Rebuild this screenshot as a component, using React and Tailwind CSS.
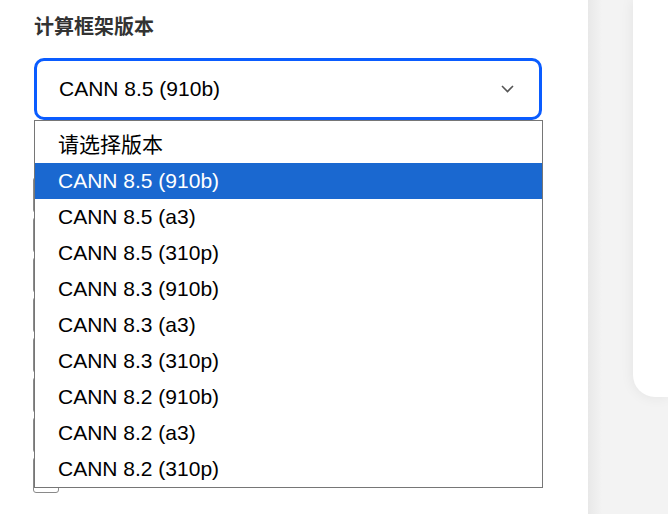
import React from "react";

const options = [
  "请选择版本",
  "CANN 8.5 (910b)",
  "CANN 8.5 (a3)",
  "CANN 8.5 (310p)",
  "CANN 8.3 (910b)",
  "CANN 8.3 (a3)",
  "CANN 8.3 (310p)",
  "CANN 8.2 (910b)",
  "CANN 8.2 (a3)",
  "CANN 8.2 (310p)",
];

export default function App() {
  return (
    <div
      className="flex w-[668px] h-[514px] overflow-hidden bg-white"
      style={{ fontFamily: '"Liberation Sans", "Noto Sans CJK SC", Arial, sans-serif' }}
    >
      <div className="relative w-[588px] shrink-0 bg-white pl-[34px] pt-[13px]">
        <div className="text-[20px] leading-[28px] font-bold text-[#333333]">计算框架版本</div>
        <div className="mt-[17px] flex h-[62px] w-[508px] items-center justify-between rounded-[10px] border-[3px] border-[#0a5cff] pl-[22px] pr-[25px]">
          <span className="text-[21px] text-black">CANN 8.5 (910b)</span>
          <svg width="13" height="8" viewBox="0 0 13 8" fill="none">
            <path d="M1 1l5.5 5.5L12 1" stroke="#555" strokeWidth="1.6" />
          </svg>
        </div>
        <div className="-ml-[1px] mt-[57px] flex flex-col gap-[4px]">
          {[0, 1, 2, 3, 4, 5, 6, 7].map((i) => (
            <div key={i} className="h-[36px] w-[26px] rounded-[3px] border border-[#8a8a8a] bg-white" />
          ))}
        </div>
        <div className="absolute left-[34px] top-[120px] w-[509px] border border-[#767676] bg-white pt-[6px]">
          {options.map((o, i) => (
            <div
              key={o}
              className={
                "flex h-[36px] items-center pl-[23px] text-[21px] " +
                (i === 1 ? "bg-[#1a68d0] text-white" : "text-black")
              }
            >
              {o}
            </div>
          ))}
        </div>
      </div>
      <div className="flex-1 bg-[linear-gradient(to_right,#e8e8e8,#f3f3f3_14px)] pl-[45px]">
        <div className="h-[397px] w-full rounded-bl-[22px] bg-white shadow-[0_0_14px_rgba(0,0,0,0.07)]" />
      </div>
    </div>
  );
}
